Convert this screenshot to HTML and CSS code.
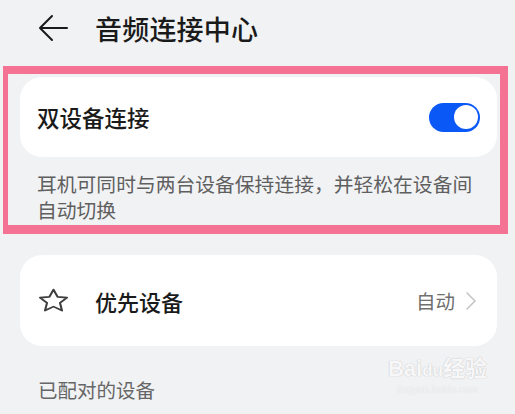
FILE: index.html
```html
<!DOCTYPE html>
<html lang="zh-CN">
<head>
<meta charset="utf-8">
<link rel="stylesheet" href="styles.css">
</head>
<body>
<div class="page">
  <header class="topbar">
    <svg class="back" width="30" height="28" viewBox="0 0 30 28">
      <path d="M14 2 L2 14 L14 26 M2 14 H29" fill="none" stroke="#1a1a1a" stroke-width="2" stroke-linecap="round" stroke-linejoin="round"/>
    </svg>
    <h1 class="title">音频连接中心</h1>
  </header>

  <section class="highlight">
    <div class="card card-switch">
      <span class="label">双设备连接</span>
      <span class="toggle"><span class="thumb"></span></span>
    </div>
    <p class="desc">耳机可同时与两台设备保持连接，并轻松在设备间自动切换</p>
  </section>

  <div class="card card-pref">
    <svg class="star" width="31" height="25" viewBox="0 0 31 31" preserveAspectRatio="none">
      <path d="M15.5 2 L19.6 10.9 L29 11.9 L22 18.4 L24 28 L15.5 23.1 L7 28 L9 18.4 L2 11.9 L11.4 10.9 Z" fill="none" stroke="#3c3c3c" stroke-width="2.1" stroke-linejoin="round"/>
    </svg>
    <span class="label">优先设备</span>
    <span class="value">自动</span>
    <svg class="chev" width="12" height="20" viewBox="0 0 12 20">
      <path d="M2 2 L10 10 L2 18" fill="none" stroke="#c4c4c4" stroke-width="1.6" stroke-linecap="round" stroke-linejoin="round"/>
    </svg>
  </div>

  <div class="section-row">
    <span class="section-title">已配对的设备</span>
    <span class="watermark">
      <span class="wm-main">Bai<span class="wm-du">du</span>经验</span>
      <span class="wm-sub">jingyan.baidu.com</span>
    </span>
  </div>
</div>
</body>
</html>
```

FILE: styles.css
```css
html, body {
  margin: 0;
  padding: 0;
  background: #f1f2f4;
}
body {
  width: 515px;
  height: 414px;
  overflow: hidden;
  font-family: "Noto Sans CJK SC", "Noto Sans", sans-serif;
  color: #1a1a1a;
}
.page {
  display: flex;
  flex-direction: column;
}
.topbar {
  display: flex;
  align-items: center;
  height: 56px;
  padding-left: 38px;
  box-sizing: border-box;
}
.back {
  display: block;
  margin-right: 27px;
}
.title {
  margin: 0;
  font-size: 27px;
  font-weight: 500;
  letter-spacing: 0.2px;
  color: #1a1a1a;
  line-height: 1;
}
.highlight {
  margin: 10px 0 0 3px;
  width: 505px;
  height: 168px;
  box-sizing: border-box;
  border-style: solid;
  border-color: #f47294;
  border-width: 8px 8px 9px 5px;
  display: flex;
  flex-direction: column;
}
.card {
  background: #ffffff;
  border-radius: 22px;
  display: flex;
  align-items: center;
  box-sizing: border-box;
}
.card-switch {
  margin: 3px 3px 0 12px;
  height: 80px;
  padding: 0 17px 0 17px;
  justify-content: space-between;
}
.label {
  font-size: 22.5px;
  font-weight: 500;
  color: #1a1a1a;
  line-height: 1;
}
.toggle {
  width: 51px;
  height: 29px;
  border-radius: 15px;
  background: #0a59f7;
  display: flex;
  align-items: center;
  justify-content: flex-end;
  padding: 0 2px;
  box-sizing: border-box;
}
.thumb {
  width: 24px;
  height: 24px;
  border-radius: 50%;
  background: #ffffff;
}
.desc {
  margin: 14px 0 0 29px;
  font-size: 19.8px;
  line-height: 25.5px;
  color: #5f5f5f;
  width: 445px;
}
.card-pref {
  margin: 21px 18px 0 20px;
  height: 91px;
  padding: 0 20px 0 18px;
}
.star {
  display: block;
  margin-right: 26px;
}
.card-pref .label {
  flex: 1;
  font-size: 22px;
}
.value {
  font-size: 19.5px;
  color: #6f6f6f;
  margin-right: 10px;
  line-height: 1;
}
.chev {
  display: block;
}
.section-row {
  display: flex;
  justify-content: space-between;
  align-items: center;
  padding: 10px 28px 0 38px;
  height: 56px;
  box-sizing: border-box;
}
.section-title {
  font-size: 19.5px;
  color: #666666;
  line-height: 1;
  margin-top: 22px;
}
.watermark {
  display: flex;
  flex-direction: column;
  align-items: center;
  margin-top: -6px;
}
.wm-main {
  font-family: "Liberation Sans", "Noto Sans CJK SC", sans-serif;
  font-weight: 700;
  font-size: 22px;
  color: #f7f7f8;
  text-shadow: 0 0 1px #c9c9cc, 0 0 1px #c9c9cc;
  line-height: 1;
}
.wm-du {
  font-size: 17px;
}
.wm-sub {
  font-family: "Liberation Sans", sans-serif;
  font-size: 10px;
  color: #f7f7f8;
  text-shadow: 0 0 1px #cfcfd2;
  margin-top: 4px;
}
```
